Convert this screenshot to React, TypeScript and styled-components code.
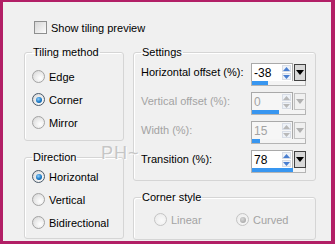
import styled, { createGlobalStyle } from "styled-components";

const GlobalStyle = createGlobalStyle`
  html, body {
    margin: 0;
    padding: 0;
    background: #f0f0f0;
  }
  body {
    font-family: "Liberation Sans", Arial, sans-serif;
  }
`;

const Frame = styled.div`
  box-sizing: border-box;
  position: relative;
  width: 335px;
  height: 244px;
  border-style: solid;
  border-color: #b21f66;
  border-width: 2px 4px 3px 3px;
  background: #f0f0f0;
  padding: 19px 0 0 21px;
  font-size: 11px;
  color: #000;
`;

const CheckRow = styled.label`
  display: flex;
  align-items: center;
  gap: 4px;
  margin-left: 10px;
  height: 13px;
`;

const CheckBox = styled.span`
  box-sizing: border-box;
  width: 13px;
  height: 13px;
  border: 1px solid #8e8f8f;
  background: linear-gradient(135deg, #d6d6d6 0%, #f4f4f4 80%, #fff 100%);
`;

const Columns = styled.div`
  display: flex;
  gap: 9px;
  margin-top: 12px;
`;

const Column = styled.div<{ $width: number }>`
  display: flex;
  flex-direction: column;
  gap: 10px;
  width: ${(p) => p.$width}px;
`;

const Group = styled.fieldset<{ $height: number; $pad: number }>`
  box-sizing: border-box;
  margin: 0;
  height: ${(p) => p.$height}px;
  padding: ${(p) => p.$pad}px 9px 0 7px;
  border: 1px solid #d5d5d5;
  border-radius: 3px;
  box-shadow: inset 1px 1px 0 #fff;
  min-width: 0;
`;

const Legend = styled.legend`
  padding: 0 1px;
  font-size: 11px;
  line-height: 13px;
`;

const RadioList = styled.div<{ $row: number; $across?: boolean }>`
  display: flex;
  flex-direction: ${(p) => (p.$across ? "row" : "column")};
  padding-left: ${(p) => (p.$across ? 13 : 0)}px;
  & > * {
    height: ${(p) => p.$row}px;
  }
`;

const RadioRow = styled.div<{ $width?: number }>`
  display: flex;
  align-items: center;
  gap: 4px;
  width: ${(p) => (p.$width ? `${p.$width}px` : "auto")};
  font-size: 11px;
`;

const RadioDot = styled.span<{ $checked?: boolean; $disabled?: boolean }>`
  box-sizing: border-box;
  flex: none;
  width: 13px;
  height: 13px;
  border-radius: 50%;
  border: 1px solid
    ${(p) => (p.$checked && !p.$disabled ? "#4a5a6a" : p.$disabled ? "#c4c4c4" : "#a3a3a3")};
  background: ${(p) =>
    p.$disabled
      ? "radial-gradient(circle at 60% 60%, #fafafa 0%, #e8e8e8 100%)"
      : "radial-gradient(circle at 65% 65%, #ffffff 0%, #e6e6e6 60%, #cfcfcf 100%)"};
  display: flex;
  align-items: center;
  justify-content: center;

  &::after {
    content: "";
    display: ${(p) => (p.$checked ? "block" : "none")};
    width: 6px;
    height: 6px;
    border-radius: 50%;
    background: ${(p) =>
      p.$disabled
        ? "radial-gradient(circle at 40% 35%, #d8d8d8 0%, #9a9a9a 100%)"
        : "radial-gradient(circle at 40% 35%, #8fd0ff 0%, #1a78c4 55%, #0b4f8c 100%)"};
  }
`;

const Label = styled.span<{ $disabled?: boolean }>`
  color: ${(p) => (p.$disabled ? "#a3a3a3" : "#000")};
  white-space: nowrap;
`;

const SettingsList = styled.div`
  display: flex;
  flex-direction: column;
  gap: 7px;
`;

const SettingRow = styled.div`
  display: flex;
  justify-content: space-between;
  align-items: flex-start;
  height: 22px;
`;

const SettingLabel = styled(Label)`
  line-height: 18px;
`;

const Spin = styled.div`
  display: flex;
  flex-direction: column;
  width: 55px;
`;

const SpinTop = styled.div`
  display: flex;
  height: 18px;
`;

const TextBox = styled.div<{ $disabled?: boolean }>`
  box-sizing: border-box;
  display: flex;
  align-items: center;
  justify-content: space-between;
  width: 42px;
  padding: 0 1px 0 2px;
  background: ${(p) => (p.$disabled ? "#f6f6f6" : "#fff")};
  border: 1px solid #a9a9a9;
  border-bottom: none;
  font-size: 12px;
  color: ${(p) => (p.$disabled ? "#a3a3a3" : "#000")};
`;

const Arrows = styled.div`
  display: flex;
  flex-direction: column;
  gap: 1px;
`;

const ArrowBtn = styled.span`
  box-sizing: border-box;
  width: 9px;
  height: 7px;
  border: 1px solid #d8dde6;
  background: #eef2f8;
  display: flex;
  align-items: center;
  justify-content: center;
`;

const DropBtn = styled.div<{ $disabled?: boolean }>`
  box-sizing: border-box;
  width: 12px;
  height: 17px;
  margin: 1px 0 0 1px;
  border: 1px solid ${(p) => (p.$disabled ? "#c2c2c2" : "#404040")};
  background: ${(p) => (p.$disabled ? "#f0f0f0" : "#d8d8d8")};
  display: flex;
  align-items: center;
  justify-content: center;
`;

const Bar = styled.div`
  box-sizing: border-box;
  height: 5px;
  border: 1px solid #b4b4b4;
  border-top: none;
  background: #f4f4f4;
`;

const BarFill = styled.div`
  height: 100%;
  background: #3896f0;
`;

const Watermark = styled.div`
  position: absolute;
  left: 98px;
  top: 141px;
  font-size: 18px;
  letter-spacing: 1px;
  color: #c6c6c6;
  text-shadow: 1px 1px 0 #fff;
  pointer-events: none;
`;

const Tri = ({ up, color }: { up?: boolean; color: string }) => (
  <svg width="7" height="4" viewBox="0 0 7 4">
    <path d={up ? "M0 4 L3.5 0 L7 4 Z" : "M0 0 L7 0 L3.5 4 Z"} fill={color} />
  </svg>
);

interface SpinFieldProps {
  value: string;
  pct: number;
  disabled?: boolean;
}

const SpinField = ({ value, pct, disabled }: SpinFieldProps) => {
  const arrow = disabled ? "#b8b8b8" : "#4a7fd0";
  return (
    <Spin>
      <SpinTop>
        <TextBox $disabled={disabled}>
          <span>{value}</span>
          <Arrows>
            <ArrowBtn>
              <Tri up color={arrow} />
            </ArrowBtn>
            <ArrowBtn>
              <Tri color={arrow} />
            </ArrowBtn>
          </Arrows>
        </TextBox>
        <DropBtn $disabled={disabled}>
          <svg width="8" height="5" viewBox="0 0 8 5">
            <path d="M0 0 L8 0 L4 5 Z" fill={disabled ? "#b0b0b0" : "#000"} />
          </svg>
        </DropBtn>
      </SpinTop>
      <Bar>
        <BarFill style={{ width: `${pct}%` }} />
      </Bar>
    </Spin>
  );
};

const settings = [
  { label: "Horizontal offset (%):", value: "-38", pct: 31 },
  { label: "Vertical offset (%):", value: "0", pct: 50, disabled: true },
  { label: "Width (%):", value: "15", pct: 15, disabled: true },
  { label: "Transition (%):", value: "78", pct: 78 },
];

export default function App() {
  return (
    <>
      <GlobalStyle />
      <Frame>
        <CheckRow>
          <CheckBox />
          <span>Show tiling preview</span>
        </CheckRow>
        <Columns>
          <Column $width={100}>
            <Group $height={95} $pad={6}>
              <Legend>Tiling method</Legend>
              <RadioList $row={23}>
                <RadioRow>
                  <RadioDot />
                  <Label>Edge</Label>
                </RadioRow>
                <RadioRow>
                  <RadioDot $checked />
                  <Label>Corner</Label>
                </RadioRow>
                <RadioRow>
                  <RadioDot />
                  <Label>Mirror</Label>
                </RadioRow>
              </RadioList>
            </Group>
            <Group $height={88} $pad={1}>
              <Legend>Direction</Legend>
              <RadioList $row={23}>
                <RadioRow>
                  <RadioDot $checked />
                  <Label>Horizontal</Label>
                </RadioRow>
                <RadioRow>
                  <RadioDot />
                  <Label>Vertical</Label>
                </RadioRow>
                <RadioRow>
                  <RadioDot />
                  <Label>Bidirectional</Label>
                </RadioRow>
              </RadioList>
            </Group>
          </Column>
          <Column $width={183}>
            <Group $height={135} $pad={4}>
              <Legend>Settings</Legend>
              <SettingsList>
                {settings.map((s) => (
                  <SettingRow key={s.label}>
                    <SettingLabel $disabled={s.disabled}>{s.label}</SettingLabel>
                    <SpinField value={s.value} pct={s.pct} disabled={s.disabled} />
                  </SettingRow>
                ))}
              </SettingsList>
            </Group>
            <Group $height={49} $pad={4}>
              <Legend>Corner style</Legend>
              <RadioList $row={23} $across>
                <RadioRow $width={82}>
                  <RadioDot $disabled />
                  <Label $disabled>Linear</Label>
                </RadioRow>
                <RadioRow>
                  <RadioDot $checked $disabled />
                  <Label $disabled>Curved</Label>
                </RadioRow>
              </RadioList>
            </Group>
          </Column>
        </Columns>
        <Watermark>PH~</Watermark>
      </Frame>
    </>
  );
}
